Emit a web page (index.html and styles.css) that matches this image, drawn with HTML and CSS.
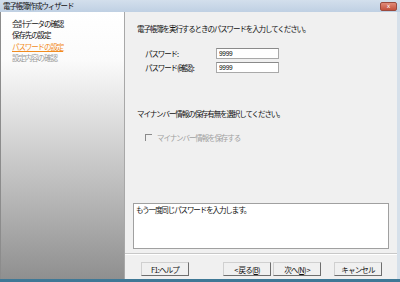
FILE: index.html
```html
<!DOCTYPE HTML>
<html lang="ja">
<head>
    <meta charset="UTF-8">
    <title>電子帳簿作成ウィザード</title>
    <link rel="stylesheet" href="styles.css">
</head>
<body>
    <div class="window">
        <div class="titlebar">
            <span class="title">電子帳簿作成ウィザード</span>
            <span class="close">x</span>
        </div>
        <div class="body">
            <ul class="nav">
                <li>会計データの確認</li>
                <li>保存先の設定</li>
                <li class="current">パスワードの設定</li>
                <li class="todo">設定内容の確認</li>
            </ul>
            <div class="main">
                <p class="lead">電子帳簿を実行するときのパスワードを入力してください。</p>
                <div class="form">
                    <div class="row">
                        <label>パスワード:</label>
                        <input type="text" value="9999">
                    </div>
                    <div class="row">
                        <label>パスワード(確認):</label>
                        <input type="text" value="9999">
                    </div>
                </div>
                <p class="lead lead2">マイナンバー情報の保存有無を選択してください。</p>
                <div class="check">
                    <span class="box"></span>
                    <span>マイナンバー情報を保存する</span>
                </div>
                <div class="hint">もう一度同じパスワードを入力します。</div>
                <div class="sep"></div>
                <div class="buttons">
                    <button class="help">F1:ヘルプ</button>
                    <button class="back">&lt;&nbsp;戻る(<u>B</u>)</button>
                    <button class="next">次へ(<u>N</u>)&nbsp;&gt;</button>
                    <button class="cancel">キャンセル</button>
                </div>
            </div>
        </div>
        <div class="frame-bottom"></div>
    </div>
</body>
</html>
```

FILE: styles.css
```css
body{margin:0;font-family:"Noto Sans CJK JP","Liberation Sans",sans-serif;}
p,ul,li{margin:0;padding:0;list-style:none;}

.window{
    width:400px;
    height:282px;
    display:flex;
    flex-direction:column;
    background:#f0f0f0;
    font-size:7.5px;
    letter-spacing:-1.1px;
    color:#111;
}
.titlebar{
    height:12px;
    display:flex;
    align-items:center;
    justify-content:space-between;
    padding:0 3px 0 3px;
    background:linear-gradient(#d3dfec,#bfd0e3);
    line-height:12px;
}
.titlebar .close{
    width:15px;
    height:7px;
    margin-top:1px;
    background:linear-gradient(#e08a78,#c4513d);
    border:1px solid #9a4a3e;
    border-radius:2px;
    color:#fff;
    font-size:6px;
    line-height:6px;
    letter-spacing:0;
    text-align:center;
    font-family:"DejaVu Sans",sans-serif;
}
.body{
    flex:1;
    display:flex;
    border-right:3px solid #d6e0ea;
}
.nav{
    width:124px;
    padding:6px 0 0 11px;
    box-sizing:border-box;
    border-left:1px solid #8c8c8c;
    background:linear-gradient(#fff 0%,#fbfbfb 18%,#c4c4c4 60%,#8f8f8f 100%);
}
.nav li{
    height:11.4px;
    line-height:11px;
}
.nav .current{
    color:#f28c1e;
    text-decoration:underline;
}
.nav .todo{
    color:#9a9a9a;
}
.main{
    flex:1;
    display:flex;
    flex-direction:column;
    border-left:1px solid #a8a8a8;
}
.lead{
    margin:12px 0 0 12px;
    line-height:10px;
}
.lead2{
    margin-top:36px;
}
.form{
    margin:14px 0 0 20px;
    display:flex;
    flex-direction:column;
    gap:3px;
}
.row{
    display:flex;
    align-items:center;
    height:11px;
}
.row label{
    width:71px;
}
.row input{
    width:63px;
    height:11px;
    box-sizing:border-box;
    margin:0;
    padding:0 0 0 2px;
    border:1px solid #a9a9a9;
    border-top-color:#8a8a8a;
    background:#fff;
    font-family:"Liberation Sans",sans-serif;
    font-size:6.5px;
    letter-spacing:-0.3px;
    outline:none;
}
.check{
    margin:13px 0 0 20px;
    height:10px;
    display:flex;
    align-items:center;
    gap:5px;
    color:#a0a0a0;
}
.check .box{
    width:6px;
    height:6px;
    border-top:1px solid #8a8a8a;
    border-left:1px solid #8a8a8a;
}
.hint{
    margin:61px 0 0 8px;
    width:256px;
    height:46px;
    box-sizing:border-box;
    padding:1px 2px;
    background:#fff;
    border:1px solid #a0a0a0;
    line-height:9px;
}
.sep{
    margin-top:4px;
    height:0;
    border-top:1px solid #c8c8c8;
    border-bottom:1px solid #fff;
}
.buttons{
    margin:7px 0 0 16px;
    display:flex;
}
.buttons button{
    width:48px;
    height:14px;
    margin:0;
    padding:0;
    background:#f0f0f0;
    border:1px solid;
    border-color:#d0d0d0 #6e6e6e #6e6e6e #d0d0d0;
    font-family:inherit;
    font-size:7.5px;
    letter-spacing:-0.8px;
    color:#111;
}
.buttons .back{
    margin-left:34px;
}
.buttons .next{
    margin-left:2px;
}
.buttons .cancel{
    margin-left:13px;
}
.frame-bottom{
    height:3px;
    background:#3f7896;
}
```
